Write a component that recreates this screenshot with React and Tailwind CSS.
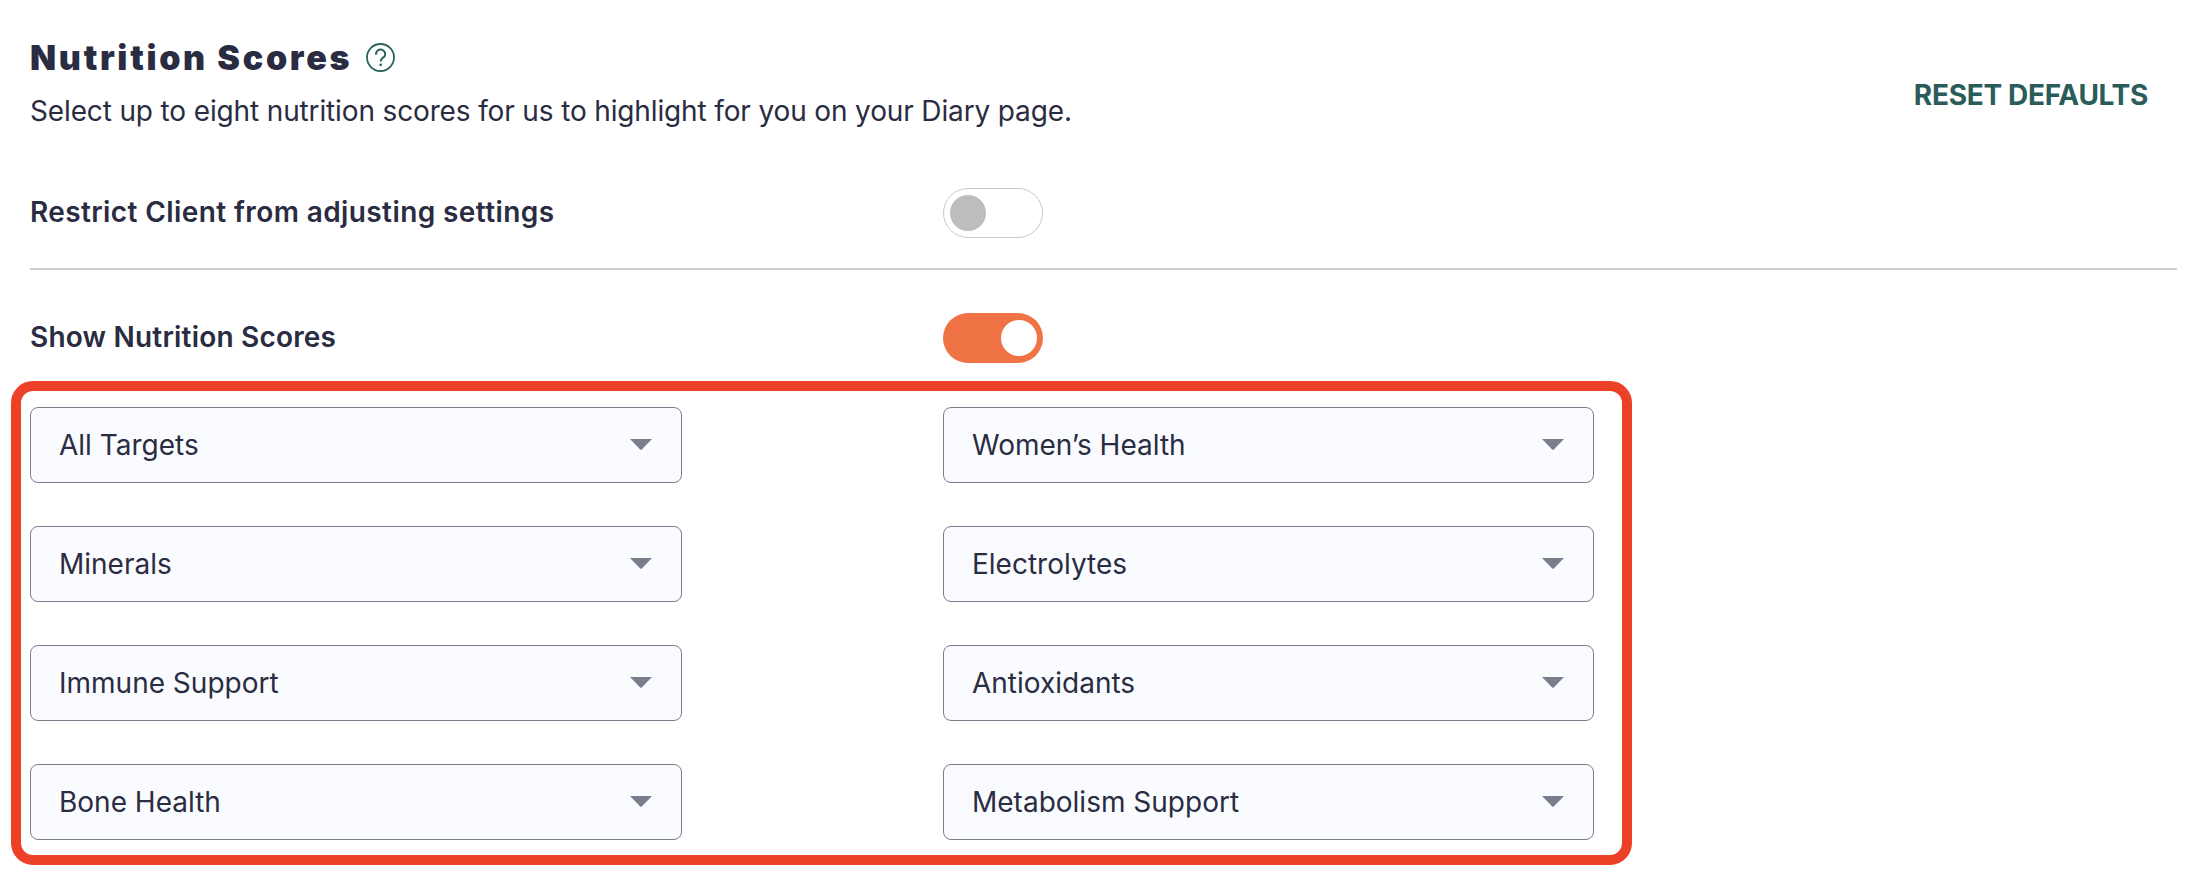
import React from "react";

const body = "font-['Inter','Liberation_Sans',sans-serif]";

function Toggle({ on }) {
  return (
    <div
      className={
        on
          ? "flex h-[50px] w-[100px] items-center justify-end rounded-full bg-[#f07346] px-[6px]"
          : "flex h-[50px] w-[100px] items-center justify-start rounded-full border border-[#c8c8c8] bg-white px-[6px]"
      }
    >
      <div className={on ? "h-[36px] w-[36px] rounded-full bg-white" : "h-[36px] w-[36px] rounded-full bg-[#bdbdbd]"} />
    </div>
  );
}

function Select({ label }) {
  return (
    <div className="flex h-[75.7px] items-center justify-between rounded-[8px] border-[1.5px] border-[#7b7d8c] bg-[#fafbff] pl-[28px] pr-[29px]">
      <span className="text-[28px] leading-[36px] text-[#2a2c42]">{label}</span>
      <svg width="22" height="11" viewBox="0 0 22 11" aria-hidden="true">
        <path d="M0 0H22L11.8 10.6Q11 11 10.2 10.6Z" fill="#7b7d8c" />
      </svg>
    </div>
  );
}

export default function App() {
  const items = [
    "All Targets",
    "Women’s Health",
    "Minerals",
    "Electrolytes",
    "Immune Support",
    "Antioxidants",
    "Bone Health",
    "Metabolism Support",
  ];
  return (
    <div className={`${body} min-h-[874px] w-[2198px] bg-white pl-[30px] pr-[21px] pt-[38px] text-[#2a2c42]`}>
      <div className="flex items-start justify-between pr-[29px]">
        <div>
          <div className="flex h-[40px] items-center gap-[14px]">
            <h1 className="text-[34px] font-black leading-[40px] tracking-[2.7px]">Nutrition Scores</h1>
            <svg className="-mt-[1px]" width="29" height="29" viewBox="0 0 29 29" fill="none" aria-hidden="true">
              <circle cx="14.5" cy="14.5" r="13.5" stroke="#2a6461" strokeWidth="1.8" />
              <path d="M10 11a4.6 4.6 0 0 1 9.2 0.4c0 3.1-4.4 3.3-4.4 6.4" stroke="#2a6461" strokeWidth="2" strokeLinecap="round" />
              <circle cx="14.7" cy="21.8" r="1.4" fill="#2a6461" />
            </svg>
          </div>
          <p className="mt-[13px] text-[28px] leading-[40px] tracking-[-0.14px]">Select up to eight nutrition scores for us to highlight for you on your Diary page.</p>
        </div>
        <button className="mt-[37px] text-[28px] font-bold leading-[40px] tracking-[-0.3px] text-[#2a5c5a]">RESET DEFAULTS</button>
      </div>

      <div className="mt-[57px] flex items-center">
        <div className="-mt-[2px] w-[913px] text-[28px] font-semibold leading-[40px] tracking-[0.4px]">Restrict Client from adjusting settings</div>
        <Toggle on={false} />
      </div>
      <div className="mt-[30px] h-[2px] bg-[#d0d0d0]" />
      <div className="mt-[43px] flex items-center">
        <div className="-mt-[2px] w-[913px] text-[28px] font-semibold leading-[40px] tracking-[0.2px]">Show Nutrition Scores</div>
        <Toggle on={true} />
      </div>

      <div className="-ml-[19px] mt-[18px] h-[484px] w-[1621px] rounded-[22px] border-[10px] border-[#ec4027] pl-[9px] pt-[16px]">
        <div className="grid grid-cols-[652px_651px] gap-x-[261px] gap-y-[43.3px]">
          {items.map((t) => (
            <Select key={t} label={t} />
          ))}
        </div>
      </div>
    </div>
  );
}
